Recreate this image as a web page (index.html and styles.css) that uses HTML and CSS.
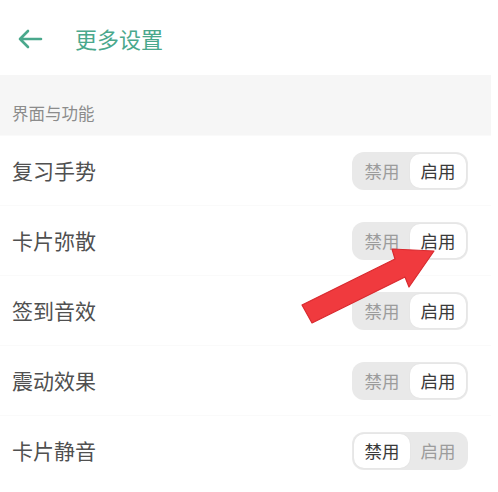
FILE: index.html
```html
<!DOCTYPE html>
<html lang="zh">
<head>
<meta charset="utf-8">
<title>更多设置</title>
<link rel="stylesheet" href="styles.css">
</head>
<body>
<div class="page">
  <header class="topbar">
    <svg class="back" width="26" height="20" viewBox="0 0 26 20">
      <path d="M24 10H3M11 2L3 10L11 18" fill="none" stroke="#4aa88c" stroke-width="2.6" stroke-linecap="round" stroke-linejoin="round"/>
    </svg>
    <h1 class="title">更多设置</h1>
  </header>
  <div class="section">界面与功能</div>
  <div class="row">
    <span class="label">复习手势</span>
    <div class="toggle"><span class="seg">禁用</span><span class="seg on">启用</span></div>
  </div>
  <div class="row">
    <span class="label">卡片弥散</span>
    <div class="toggle"><span class="seg">禁用</span><span class="seg on">启用</span></div>
  </div>
  <div class="row">
    <span class="label">签到音效</span>
    <div class="toggle"><span class="seg">禁用</span><span class="seg on">启用</span></div>
  </div>
  <div class="row">
    <span class="label">震动效果</span>
    <div class="toggle"><span class="seg">禁用</span><span class="seg on">启用</span></div>
  </div>
  <div class="row">
    <span class="label">卡片静音</span>
    <div class="toggle"><span class="seg on">禁用</span><span class="seg">启用</span></div>
  </div>
</div>
<svg class="pointer" width="498" height="492" viewBox="0 0 498 492">
  <polygon points="302,305 395,259 392,249 434,251 409,287 405,277 312,323" fill="#f03a3e" stroke="#d9292e" stroke-width="1.2" stroke-linejoin="round"/>
</svg>
</body>
</html>
```

FILE: styles.css
```css
html, body {
  margin: 0;
  padding: 0;
  background: #ffffff;
}
body {
  font-family: "Noto Sans CJK SC", "Noto Sans", sans-serif;
  width: 498px;
  height: 492px;
  overflow: hidden;
  position: relative;
}
.page {
  width: 491px;
}
.topbar {
  height: 75px;
  display: flex;
  align-items: center;
  padding-left: 17px;
  box-sizing: border-box;
}
.back {
  display: block;
  margin-top: 2px;
}
.title {
  margin: 0 0 0 32px;
  font-size: 22px;
  font-weight: 400;
  color: #4aa88c;
  line-height: 1;
  padding-top: 1px;
}
.section {
  height: 60px;
  box-sizing: border-box;
  background: #f6f6f6;
  padding: 26px 0 0 12px;
  font-size: 16.5px;
  line-height: 24px;
  color: #8c8c8c;
}
.row {
  height: 70px;
  box-sizing: border-box;
  display: flex;
  align-items: center;
  justify-content: space-between;
  padding: 0 23px 0 12px;
  border-top: 1px solid #fafafa;
}
.row:first-of-type {
  border-top: none;
}
.label {
  font-size: 21px;
  color: #505050;
  line-height: 1;
}
.toggle {
  width: 116px;
  height: 38px;
  box-sizing: border-box;
  background: #e9e9e9;
  border-radius: 12px;
  padding: 2px;
  display: flex;
}
.seg {
  flex: 1;
  display: flex;
  align-items: center;
  justify-content: center;
  font-size: 17.5px;
  color: #9c9c9c;
  border-radius: 10px;
}
.seg.on {
  background: #ffffff;
  color: #3a3a3a;
  box-shadow: 0 0 2px rgba(0,0,0,0.06);
}
.pointer {
  position: absolute;
  left: 0;
  top: 0;
  pointer-events: none;
}
```
